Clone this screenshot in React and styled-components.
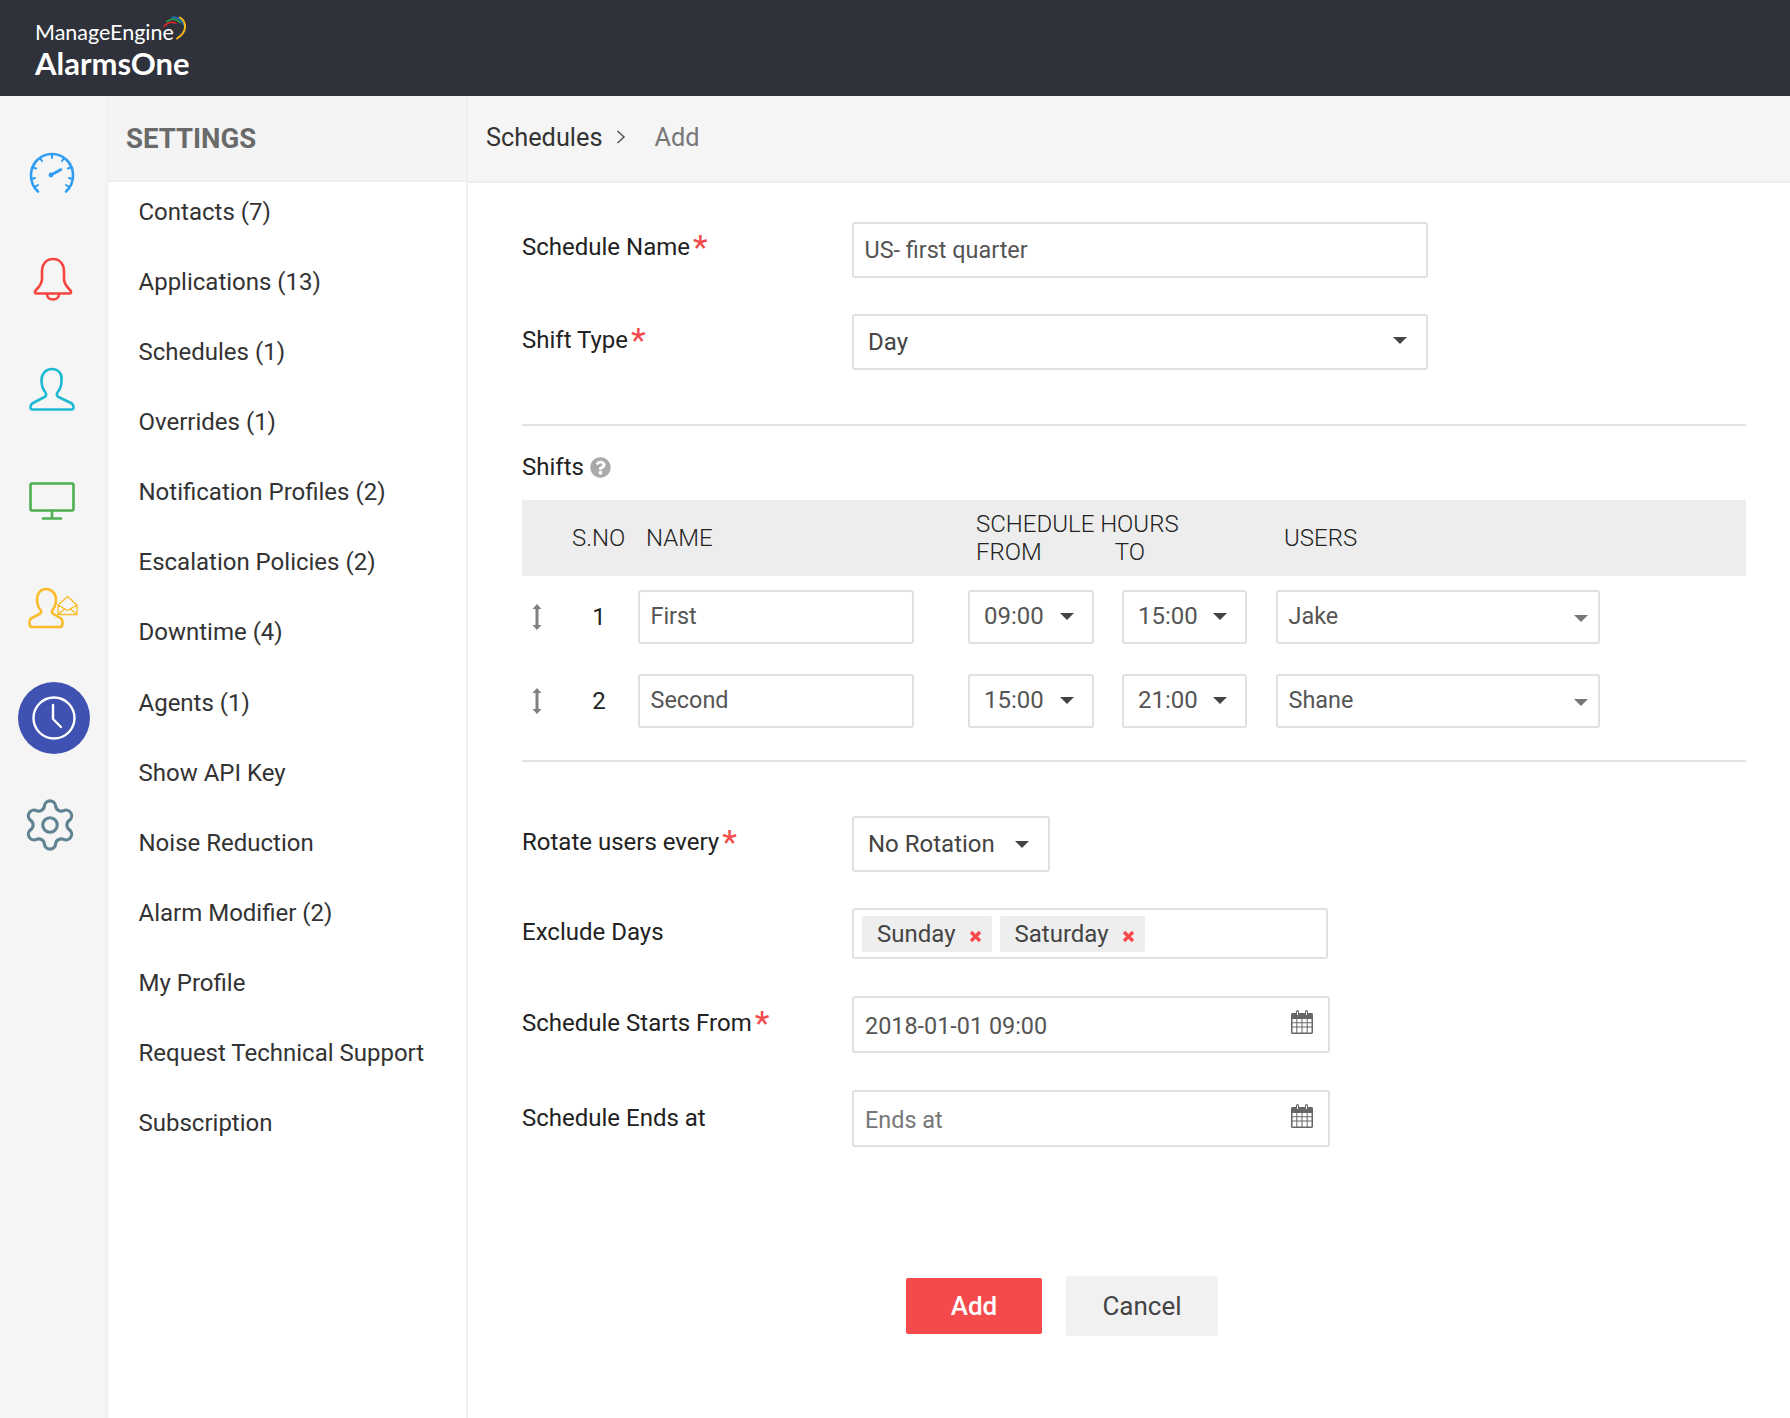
import React from 'react';
import styled, { createGlobalStyle } from 'styled-components';
import { Settings } from 'lucide-react';
import { FaQuestionCircle } from 'react-icons/fa';

const GlobalStyle = createGlobalStyle`
  html, body {
    margin: 0;
    padding: 0;
    background: #fff;
  }
  * {
    box-sizing: border-box;
  }
`;

const menuItems = [
  'Contacts (7)', 'Applications (13)', 'Schedules (1)', 'Overrides (1)',
  'Notification Profiles (2)', 'Escalation Policies (2)', 'Downtime (4)', 'Agents (1)',
  'Show API Key', 'Noise Reduction', 'Alarm Modifier (2)', 'My Profile',
  'Request Technical Support', 'Subscription',
];

const shifts = [
  { no: 1, name: 'First', from: '09:00', to: '15:00', user: 'Jake' },
  { no: 2, name: 'Second', from: '15:00', to: '21:00', user: 'Shane' },
];

const GaugeIcon = () => (
  <svg width="46" height="42" viewBox="0 0 46 42" fill="none" stroke="#2f9df4" strokeWidth="2.6" strokeLinecap="round">
    <path d="M9 39.500C4.500 35.500 2 30 2 23.500 2 11.500 11 2 23 2s21 9.500 21 21.500c0 6.500-2.500 12-7 16" />
    <path d="M23 2v4M11 6l2 3M35 6l-2 3M3.500 15l3.500 1.500M42.500 15 39 16.500M2.500 27l3.500-1M43.500 27l-3.500-1M6 35l3-2M40 35l-3-2" strokeWidth="2" />
    <path d="M22 23 32 17.500" />
    <circle cx="22" cy="23" r="2.400" fill="#2f9df4" stroke="none" />
  </svg>
);

const BellIcon = () => (
  <svg width="40" height="44" viewBox="0 0 40 44" fill="none" stroke="#f4453f" strokeWidth="2.600" strokeLinejoin="round">
    <path d="M20 2C12.500 2 9 8 9 14v8c0 5-3 8-6 11-1.500 1.500-1.500 3.500.5 3.500h33c2 0 2-2 .5-3.500-3-3-6-6-6-11v-8C31 8 27.500 2 20 2Z" />
    <path d="M14 37c0 3.500 2.500 5.500 6 5.500s6-2 6-5.500" />
  </svg>
);

const UserIcon = () => (
  <svg width="46" height="44" viewBox="0 0 46 44" fill="none" stroke="#1fb9d3" strokeWidth="2.600" strokeLinejoin="round">
    <path d="M23 2c-6.500 0-10.500 5-10.500 11.500 0 5 1.500 9 4 12 1 1.500 1 3.500-1 4.500L4 36c-2 1-2.500 2.500-2.500 4.500 0 1.500.5 2 2 2h39c1.500 0 2-.5 2-2 0-2-.5-3.500-2.500-4.500l-12.500-6c-2-1-2-3-1-4.500 2.500-3 4-7 4-12C33.500 7 29.500 2 23 2Z" />
  </svg>
);

const MonitorIcon = () => (
  <svg width="46" height="38" viewBox="0 0 46 38" fill="none" stroke="#4caf50" strokeWidth="2.600" strokeLinejoin="round" strokeLinecap="round">
    <rect x="1.500" y="1.500" width="43" height="27" rx="1.500" />
    <path d="M23 29v7M14 36.500h18" />
  </svg>
);

const UserMailIcon = () => (
  <svg width="50" height="42" viewBox="0 0 50 42" fill="none" stroke="#fbbc2c" strokeWidth="2.600" strokeLinejoin="round">
    <path d="M18 2c-5.500 0-9 4.500-9 10.500 0 4.500 1.500 8 3.500 10.500 1 1.500 1 3-1 4L3 31.500C1.500 32.500 1.500 34 1.500 36c0 2 .5 4 2.500 4h28c2 0 2.500-2 2.500-4 0-2 0-3.500-1.500-4.500L25.500 27c-2-1-2-2.500-1-4 2-2.500 3.500-6 3.500-10.500C28 6.500 23.500 2 18 2Z" />
    <path d="M30 18 39.500 9.500 49 18v9.500H30ZM30 18l9.500 5.500L49 18M30 27.500l7-6M49 27.500l-7-6" strokeWidth="1.300" />
  </svg>
);

const ClockIcon = () => (
  <svg width="44" height="44" viewBox="0 0 44 44" fill="none" stroke="#fff" strokeWidth="2.400" strokeLinecap="round" strokeLinejoin="round">
    <circle cx="22" cy="22" r="20.500" />
    <path d="M21 9v14l8 8" />
  </svg>
);

const CalendarIcon = () => (
  <CalendarGlyph>
    <svg width="22" height="24" viewBox="0 0 22 24" fill="#666">
      <path d="M1.500 3H5V1.500a1.500 1.500 0 0 1 3 0V3h6V1.500a1.500 1.500 0 0 1 3 0V3h3.500c.8 0 1.500.7 1.500 1.500v18c0 .8-.7 1.500-1.500 1.500h-19C.7 24 0 23.300 0 22.500v-18C0 3.700.7 3 1.500 3Z" />
      <path fill="#fff" d="M6 1.500h1V5H6zM15 1.500h1V5h-1zM1.500 9h3.800v3.200H1.500zM6.300 9h4.200v3.200H6.300zM11.500 9h4.200v3.200h-4.200zM16.700 9h3.800v3.200h-3.800zM1.500 13.200h3.800v3.300H1.500zM6.300 13.200h4.200v3.300H6.300zM11.500 13.200h4.200v3.300h-4.200zM16.700 13.200h3.800v3.300h-3.800zM1.500 17.500h3.800v5H1.500zM6.300 17.500h4.200v5H6.300zM11.500 17.500h4.200v5h-4.200zM16.700 17.500h3.800v5h-3.800z" />
    </svg>
  </CalendarGlyph>
);

const DragIcon = () => (
  <svg width="10" height="26" viewBox="0 0 10 26" fill="#808080">
    <path d="M5 0 9.500 5H6.500V21H9.500L5 26 .5 21H3.500V5H.5Z" />
  </svg>
);

const RemoveIcon = () => (
  <RemoveGlyph>
    <svg width="13" height="13" viewBox="0 0 13 13" fill="none" stroke="#f44a4c" strokeWidth="3.300">
      <path d="M2 2l9 9M11 2l-9 9" />
    </svg>
  </RemoveGlyph>
);

// the coloured swoosh above the end of ManageEngine
const LogoArcs = () => (
  <svg width="24" height="24" viewBox="0 0 24 24" fill="none" strokeLinecap="round">
    <path d="M1 10.500C4 6.500 8 5.500 13 7" stroke="#d8232a" strokeWidth="1.700" />
    <path d="M4 5.500C8 2.500 13 2.500 17 6.500" stroke="#2e9e46" strokeWidth="1.700" />
    <path d="M9 1.500C14 .5 19 3.500 20.500 9" stroke="#1b75bb" strokeWidth="1.700" />
    <path d="M17 1.500C24 6 24.500 16 14 22.500" stroke="#fcb614" strokeWidth="2" />
  </svg>
);

const App = () => (
  <Page>
    <GlobalStyle />
    <TopBar>
      <Logo>
        <LogoVendor>ManageEngine<LogoMark><LogoArcs /></LogoMark></LogoVendor>
        <LogoProduct>AlarmsOne</LogoProduct>
      </Logo>
    </TopBar>
    <Body>
      <Rail>
        <RailItem $top={56} $left={-3}><GaugeIcon /></RailItem>
        <RailItem $top={63} $left={-1}><BellIcon /></RailItem>
        <RailItem $top={66} $left={-3}><UserIcon /></RailItem>
        <RailItem $top={71} $left={-3}><MonitorIcon /></RailItem>
        <RailItem $top={67} $left={-1}><UserMailIcon /></RailItem>
        <ActiveRailItem><ClockIcon /></ActiveRailItem>
        <RailItem $top={42} $left={-8}><Settings size={58} color="#5f8391" strokeWidth={1.300} /></RailItem>
      </Rail>
      <SidePanel>
        <SideHeader>SETTINGS</SideHeader>
        <Menu>
          {menuItems.map(item => <MenuItem key={item}>{item}</MenuItem>)}
        </Menu>
      </SidePanel>
      <Main>
        <Breadcrumb>
          <Crumb>Schedules</Crumb>
          <CrumbSep>
            <svg width="10" height="16" viewBox="0 0 10 16" fill="none" stroke="#555" strokeWidth="1.500"><path d="M1.500 2 8 8l-6.500 6" /></svg>
          </CrumbSep>
          <CrumbCurrent>Add</CrumbCurrent>
        </Breadcrumb>
        <Form>
          <FormRow $gap={36}>
            <Label>Schedule Name<Required>*</Required></Label>
            <Field $width={576}>US- first quarter</Field>
          </FormRow>
          <FormRow>
            <Label $shift={1}>Shift Type<Required>*</Required></Label>
            <SelectField $width={576}>Day<Caret $lift={3} /></SelectField>
          </FormRow>
          <Divider $top={54} />
          <ShiftsTitle>Shifts <FaQuestionCircle size={21} color="#aaa" /></ShiftsTitle>
          <ShiftHead>
            <HeadCell $width={74}>S.NO</HeadCell>
            <HeadCell $width={330}>NAME</HeadCell>
            <HeadCell $width={308}>SCHEDULE HOURS<br />FROM<HeadTo>TO</HeadTo></HeadCell>
            <HeadCell>USERS</HeadCell>
          </ShiftHead>
          {shifts.map(shift => (
            <ShiftRow key={shift.no}>
              <DragCell><DragIcon /></DragCell>
              <ShiftNo>{shift.no}</ShiftNo>
              <ShiftField $width={276}>{shift.name}</ShiftField>
              <ShiftSelect $width={126} $left={54}>{shift.from}<Caret /></ShiftSelect>
              <ShiftSelect $width={125} $left={28}>{shift.to}<Caret /></ShiftSelect>
              <ShiftField $width={324} $left={29}>{shift.user}<LightCaret /></ShiftField>
            </ShiftRow>
          ))}
          <Divider $top={32} />
          <FormRow $top={54}>
            <Label $shift={1}>Rotate users every<Required>*</Required></Label>
            <SelectField $width={198}>No Rotation<Caret /></SelectField>
          </FormRow>
          <FormRow $top={36}>
            <Label $shift={-1}>Exclude Days</Label>
            <TagBox>
              <Tag>Sunday<RemoveIcon /></Tag>
              <Tag>Saturday<RemoveIcon /></Tag>
            </TagBox>
          </FormRow>
          <FormRow $top={37}>
            <Label $shift={2}>Schedule Starts From<Required>*</Required></Label>
            <DateField>2018-01-01 09:00<CalendarIcon /></DateField>
          </FormRow>
          <FormRow $top={37}>
            <Label $shift={3}>Schedule Ends at</Label>
            <DateField $empty>Ends at<CalendarIcon /></DateField>
          </FormRow>
          <Actions>
            <AddButton>Add</AddButton>
            <CancelButton>Cancel</CancelButton>
          </Actions>
        </Form>
      </Main>
    </Body>
  </Page>
);

const Page = styled.div`
  width: 1790px;
  height: 1418px;
  display: flex;
  flex-direction: column;
  overflow: hidden;
  font-family: Roboto, "Liberation Sans", sans-serif;
  color: #333;
`;

const TopBar = styled.header`
  height: 96px;
  flex: none;
  background: #2f323b;
  padding: 19px 0 0 35px;
`;

const Logo = styled.div`
  color: #fff;
  font-family: Lato, "Open Sans", sans-serif;
`;

const LogoVendor = styled.div`
  position: relative;
  font-size: 21.500px;
  line-height: 26px;
  width: 142px;
`;

const LogoMark = styled.span`
  position: absolute;
  left: 128px;
  top: -3px;
`;

const LogoProduct = styled.div`
  font-size: 31px;
  line-height: 36px;
  font-weight: 700;
`;

const Body = styled.div`
  flex: 1;
  display: flex;
  min-height: 0;
`;

const Rail = styled.nav`
  width: 108px;
  flex: none;
  background: #f5f5f5;
  border-right: 1px solid #ececec;
  display: flex;
  flex-direction: column;
  align-items: center;
`;

const RailItem = styled.div`
  display: flex;
  margin-top: ${props => props.$top}px;
  margin-left: ${props => props.$left || 0}px;
`;

const ActiveRailItem = styled.div`
  width: 72px;
  height: 72px;
  margin-top: 53px;
  border-radius: 50%;
  background: #3f51b1;
  display: flex;
  align-items: center;
  justify-content: center;
`;

const SidePanel = styled.aside`
  width: 360px;
  flex: none;
  background: #fff;
  border-right: 2px solid #efefef;
`;

const SideHeader = styled.div`
  height: 86px;
  background: #f4f4f4;
  border-bottom: 2px solid #ededed;
  padding: 0 0 0 18px;
  display: flex;
  align-items: center;
  font-size: 27.500px;
  font-weight: 700;
  color: #6a6a6a;
`;

const Menu = styled.div`
  margin-top: -5.500px;
`;

const MenuItem = styled.div`
  height: 70.150px;
  padding-left: 30.500px;
  display: flex;
  align-items: center;
  font-size: 24px;
  color: #333;
`;

const Main = styled.main`
  flex: 1;
  min-width: 0;
`;

const Breadcrumb = styled.div`
  height: 87px;
  background: #f5f5f5;
  border-bottom: 2px solid #ededed;
  padding: 0 0 3px 18px;
  display: flex;
  align-items: center;
  font-size: 25.300px;
`;

const Crumb = styled.span`
  color: #333;
`;

const CrumbSep = styled.span`
  display: flex;
  margin: 0 28px 0 14px;
`;

const CrumbCurrent = styled.span`
  color: #777;
`;

const Form = styled.div`
  padding: 39px 44px 0 54px;
`;

const FormRow = styled.div`
  display: flex;
  align-items: flex-start;
  margin-top: ${props => props.$top || 0}px;
  margin-bottom: ${props => props.$gap || 0}px;
`;

const Label = styled.label`
  width: 330px;
  flex: none;
  margin-top: ${props => props.$shift || 0}px;
  font-size: 24px;
  line-height: 50px;
  color: #222;
  display: flex;
`;

const Required = styled.span`
  color: #f44a4c;
  font-size: 34px;
  line-height: 50px;
  margin-left: 3px;
`;

const Field = styled.div`
  width: ${props => props.$width}px;
  height: 56px;
  border: 2px solid #e0e0e0;
  border-radius: 3px;
  padding: 0 10.500px;
  display: flex;
  align-items: center;
  font-size: 23.400px;
  color: #555;
`;

const SelectField = styled(Field)`
  justify-content: space-between;
  padding: 0 19px 0 14px;
  font-size: 24px;
  color: #444;
`;

const Caret = styled.span`
  width: 0;
  height: 0;
  flex: none;
  margin-bottom: ${props => props.$lift || 0}px;
  border-left: 7px solid transparent;
  border-right: 7px solid transparent;
  border-top: 7px solid #444;
`;

const LightCaret = styled(Caret)`
  border-top-color: #777;
  margin-left: auto;
  margin-top: 4px;
`;

const Divider = styled.hr`
  border: 0;
  height: 2px;
  background: #e2e2e2;
  margin: ${props => props.$top}px 0 0;
`;

const ShiftsTitle = styled.div`
  display: flex;
  align-items: center;
  gap: 6px;
  height: 30px;
  margin-top: 26px;
  font-size: 24px;
  color: #222;
`;

const ShiftHead = styled.div`
  height: 76px;
  margin-top: 18px;
  padding: 0 0 0 50px;
  background: #ededed;
  display: flex;
  align-items: center;
  font-size: 24px;
  font-weight: 300;
  line-height: 28.500px;
  color: #222;
`;

const HeadCell = styled.div`
  width: ${props => (props.$width ? `${props.$width}px` : 'auto')};
  flex: none;
`;

const HeadTo = styled.span`
  margin-left: 73px;
`;

const ShiftRow = styled.div`
  display: flex;
  align-items: center;
  height: 54px;
  margin-top: 14px;

  & + & {
    margin-top: 30px;
  }
`;

const DragCell = styled.div`
  width: 30px;
  flex: none;
  display: flex;
  justify-content: center;
`;

const ShiftNo = styled.div`
  width: 86px;
  flex: none;
  font-size: 24px;
  text-align: center;
  color: #222;
  padding-left: 8px;
`;

const ShiftField = styled(Field)`
  flex: none;
  height: 54px;
  padding-bottom: 2px;
  margin-left: ${props => props.$left || 0}px;
`;

const ShiftSelect = styled(ShiftField)`
  justify-content: space-between;
  padding: 0 18px 2px 14px;
  font-size: 24px;
`;

const TagBox = styled.div`
  width: 476px;
  height: 51px;
  border: 2px solid #e0e0e0;
  border-radius: 3px;
  padding: 6px 8px;
  display: flex;
  gap: 8px;
`;

const Tag = styled.span`
  height: 36px;
  padding: 0 10px 0 15px;
  background: #eee;
  border-radius: 2px;
  display: flex;
  align-items: center;
  gap: 13px;
  font-size: 24px;
  color: #444;
`;

const RemoveGlyph = styled.span`
  display: flex;
  margin-top: 4px;
`;

const DateField = styled.div`
  width: 478px;
  height: 57px;
  border: 2px solid #e0e0e0;
  border-radius: 3px;
  padding: 3px 15px 0 11px;
  display: flex;
  align-items: center;
  justify-content: space-between;
  font-size: 23.400px;
  color: ${props => (props.$empty ? '#777' : '#555')};
`;

const CalendarGlyph = styled.span`
  display: flex;
  margin-top: -8px;
`;

const Actions = styled.div`
  display: flex;
  align-items: center;
  gap: 24px;
  margin: 129px 0 0 384px;
`;

const AddButton = styled.button`
  width: 136px;
  height: 56px;
  border: 0;
  border-radius: 2px;
  background: #f44a4c;
  color: #fff;
  font-family: inherit;
  font-size: 26px;
  font-weight: 500;
`;

const CancelButton = styled.button`
  width: 152px;
  height: 60px;
  border: 0;
  border-radius: 2px;
  background: #f1f1f1;
  color: #444;
  font-family: inherit;
  font-size: 26px;
`;

export default App;
